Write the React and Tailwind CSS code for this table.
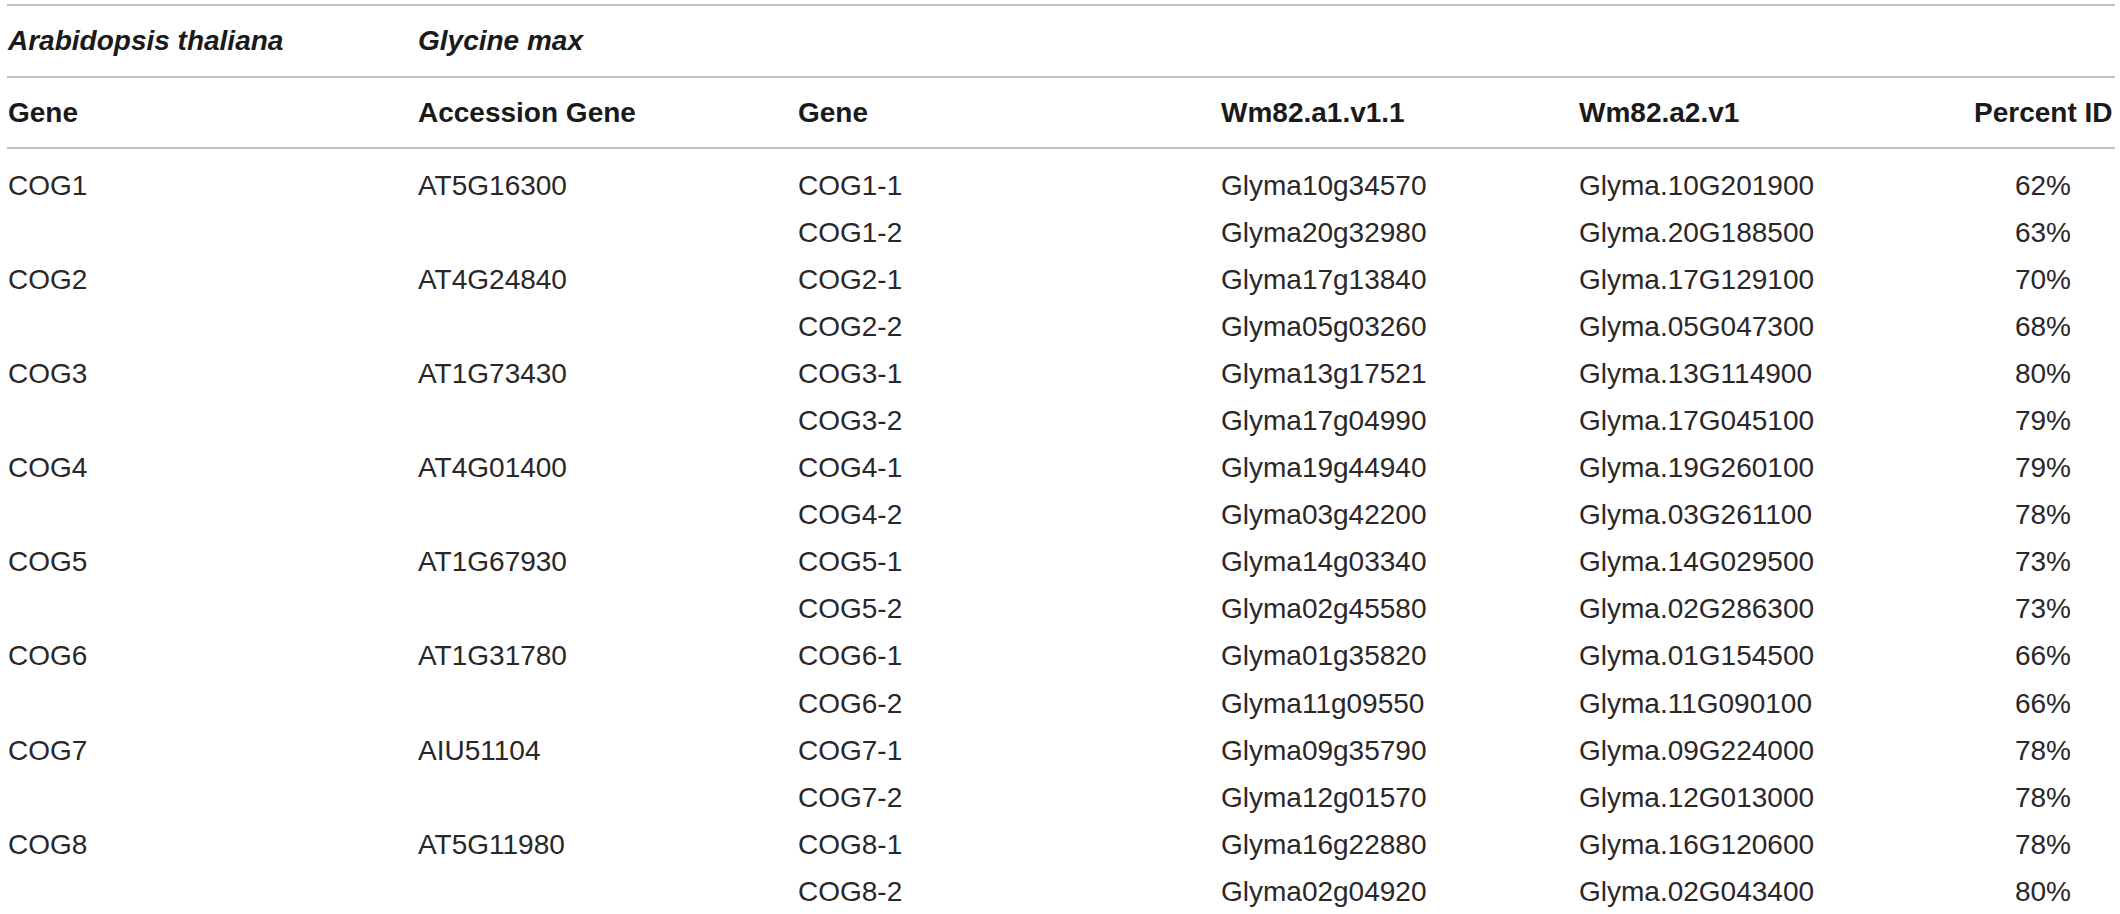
const orthologs = [
  {
    gene: "COG1",
    accession: "AT5G16300",
    soy: [
      ["COG1-1", "Glyma10g34570", "Glyma.10G201900", "62%"],
      ["COG1-2", "Glyma20g32980", "Glyma.20G188500", "63%"],
    ],
  },
  {
    gene: "COG2",
    accession: "AT4G24840",
    soy: [
      ["COG2-1", "Glyma17g13840", "Glyma.17G129100", "70%"],
      ["COG2-2", "Glyma05g03260", "Glyma.05G047300", "68%"],
    ],
  },
  {
    gene: "COG3",
    accession: "AT1G73430",
    soy: [
      ["COG3-1", "Glyma13g17521", "Glyma.13G114900", "80%"],
      ["COG3-2", "Glyma17g04990", "Glyma.17G045100", "79%"],
    ],
  },
  {
    gene: "COG4",
    accession: "AT4G01400",
    soy: [
      ["COG4-1", "Glyma19g44940", "Glyma.19G260100", "79%"],
      ["COG4-2", "Glyma03g42200", "Glyma.03G261100", "78%"],
    ],
  },
  {
    gene: "COG5",
    accession: "AT1G67930",
    soy: [
      ["COG5-1", "Glyma14g03340", "Glyma.14G029500", "73%"],
      ["COG5-2", "Glyma02g45580", "Glyma.02G286300", "73%"],
    ],
  },
  {
    gene: "COG6",
    accession: "AT1G31780",
    soy: [
      ["COG6-1", "Glyma01g35820", "Glyma.01G154500", "66%"],
      ["COG6-2", "Glyma11g09550", "Glyma.11G090100", "66%"],
    ],
  },
  {
    gene: "COG7",
    accession: "AIU51104",
    soy: [
      ["COG7-1", "Glyma09g35790", "Glyma.09G224000", "78%"],
      ["COG7-2", "Glyma12g01570", "Glyma.12G013000", "78%"],
    ],
  },
  {
    gene: "COG8",
    accession: "AT5G11980",
    soy: [
      ["COG8-1", "Glyma16g22880", "Glyma.16G120600", "78%"],
      ["COG8-2", "Glyma02g04920", "Glyma.02G043400", "80%"],
    ],
  },
];

// column edges taken from the reference: 8 / 418 / 798 / 1221 / 1579 / 1974-2112
const cols = "grid grid-cols-[410px_380px_423px_358px_395px_138px] items-center pl-[1px]";

function Rule() {
  return <div className="h-[2px] bg-[#c2c2c2]" />;
}

function DataRow({ cells }) {
  return (
    <div className={`${cols} h-[47.1px] text-[#2a2728]`}>
      {cells.map((c, i) => (
        <div key={i} className={`whitespace-nowrap ${i === 5 ? "text-center" : ""}`}>
          {c}
        </div>
      ))}
    </div>
  );
}

export default function App() {
  return (
    <div className="w-[2120px] h-[914px] overflow-hidden bg-white font-['Liberation_Sans',Arial,sans-serif] text-[28px] leading-none">
      <div className="ml-[7px] w-[2108px] pt-[4px]">
        <Rule />
        <div className={`${cols} h-[70px] font-bold italic text-[#1a1a1a]`}>
          <div>Arabidopsis thaliana</div>
          <div>Glycine max</div>
        </div>
        <Rule />
        <div className={`${cols} h-[69px] font-bold text-[#1a1a1a]`}>
          <div>Gene</div>
          <div>Accession Gene</div>
          <div>Gene</div>
          <div>Wm82.a1.v1.1</div>
          <div>Wm82.a2.v1</div>
          <div className="whitespace-nowrap text-center">Percent ID</div>
        </div>
        <Rule />
        <div className="pt-[13px]">
          {orthologs.map((o) =>
            o.soy.map((s, i) => (
              <DataRow
                key={s[0]}
                cells={[i === 0 ? o.gene : "", i === 0 ? o.accession : "", ...s]}
              />
            ))
          )}
        </div>
      </div>
    </div>
  );
}
